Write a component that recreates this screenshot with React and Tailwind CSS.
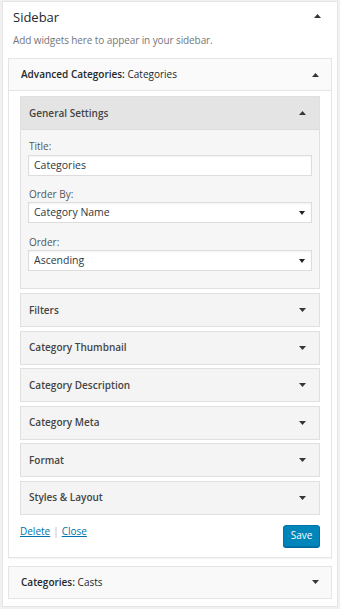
import React from "react";

const font = { fontFamily: '"Open Sans", "Liberation Sans", sans-serif' };

const Arrow = ({ up = false, className = "" }) => (
  <svg width="7" height="4" viewBox="0 0 7 4" className={className}>
    {up ? (
      <polygon points="0,4 7,4 3.5,0" fill="#32373c" />
    ) : (
      <polygon points="0,0 7,0 3.5,4" fill="#32373c" />
    )}
  </svg>
);

const SelectBox = ({ value }) => (
  <div className="h-[21px] mt-[1px] flex items-center justify-between bg-white border border-[#dddddd] pl-[5px] pr-[6px] text-[10.5px] text-[#32373c] shadow-[inset_0_1px_2px_rgba(0,0,0,0.05)]">
    <span>{value}</span>
    <svg width="6" height="4" viewBox="0 0 6 4">
      <polygon points="0,0 6,0 3,4" fill="#222" />
    </svg>
  </div>
);

const Section = ({ title }) => (
  <div className="h-[34px] flex items-center justify-between bg-[#f4f4f4] border border-[#e0e0e0] pl-[8px] pr-[13px]">
    <span className="text-[10px] font-semibold text-[#444]">{title}</span>
    <Arrow />
  </div>
);

const sections = [
  "Filters",
  "Category Thumbnail",
  "Category Description",
  "Category Meta",
  "Format",
  "Styles & Layout",
];

export default function App() {
  return (
    <div className="w-[340px] h-[609px] bg-[#f1f1f1] pt-[1px] pl-[2px]" style={font}>
      <div className="w-[336px] h-[606px] bg-white border border-[#e5e5e5]">
        <div className="pl-[10px] pr-[16px] pt-[6px]">
          <div className="flex items-center justify-between h-[20px]">
            <span className="text-[13px] text-[#23282d]">Sidebar</span>
            <Arrow up className="-mt-[4px]" />
          </div>
          <div className="mt-[4px] h-[16px] leading-[16px] text-[10px] tracking-[-0.1px] text-[#72777c]">
            Add widgets here to appear in your sidebar.
          </div>
        </div>

        <div className="mx-[5px] mt-[10px] border border-[#e5e5e5] bg-white shadow-[0_1px_1px_rgba(0,0,0,0.04)]">
          <div className="h-[32px] flex items-center justify-between bg-[#fafafa] border-b border-[#e5e5e5] pl-[12px] pr-[12px]">
            <span className="text-[10px] text-[#23282d]">
              <span className="font-semibold">Advanced Categories:</span> Categories
            </span>
            <Arrow up />
          </div>

          <div className="px-[11px] pt-[5px]">
            <div className="border border-[#e0e0e0] bg-[#f6f6f6]">
              <div className="h-[33px] flex items-center justify-between bg-[#e4e4e4] border-b border-[#dcdcdc] pl-[8px] pr-[13px]">
                <span className="text-[10px] font-semibold text-[#444]">General Settings</span>
                <Arrow up />
              </div>
              <div className="px-[7px] pt-[9px] pb-[17px] text-[10px] text-[#555]">
                <div className="leading-[14px] pl-[1px]">Title:</div>
                <div className="h-[21px] mt-[2px] flex items-center bg-white border border-[#dddddd] pl-[5px] text-[10.5px] text-[#32373c] shadow-[inset_0_1px_2px_rgba(0,0,0,0.05)]">
                  Categories
                </div>
                <div className="leading-[14px] mt-[11px] pl-[1px]">Order By:</div>
                <SelectBox value="Category Name" />
                <div className="leading-[14px] mt-[12px] pl-[1px]">Order:</div>
                <SelectBox value="Ascending" />
              </div>
            </div>

            <div className="mt-[4px] flex flex-col gap-[3.5px]">
              {sections.map((s) => (
                <Section key={s} title={s} />
              ))}
            </div>

            <div className="flex justify-between items-start pt-[10px] pb-[10px]">
              <div className="-mt-[1px] leading-[14px] text-[10px]">
                <span className="text-[#0073aa] underline">Delete</span>
                <span className="text-[#d3a9b0] mx-[3px]">|</span>
                <span className="text-[#0073aa] underline">Close</span>
              </div>
              <div className="h-[22px] w-[37px] flex items-center justify-center rounded-[3px] bg-[#0085ba] border border-[#0073aa] shadow-[0_1px_0_#006799] text-[10px] text-white">
                Save
              </div>
            </div>
          </div>
        </div>

        <div className="mx-[5px] mt-[8px] h-[33px] flex items-center justify-between bg-[#f9f9f9] border border-[#e5e5e5] pl-[12px] pr-[12px]">
          <span className="text-[10px] text-[#23282d]">
            <span className="font-semibold">Categories:</span> Casts
          </span>
          <Arrow />
        </div>
      </div>
    </div>
  );
}
